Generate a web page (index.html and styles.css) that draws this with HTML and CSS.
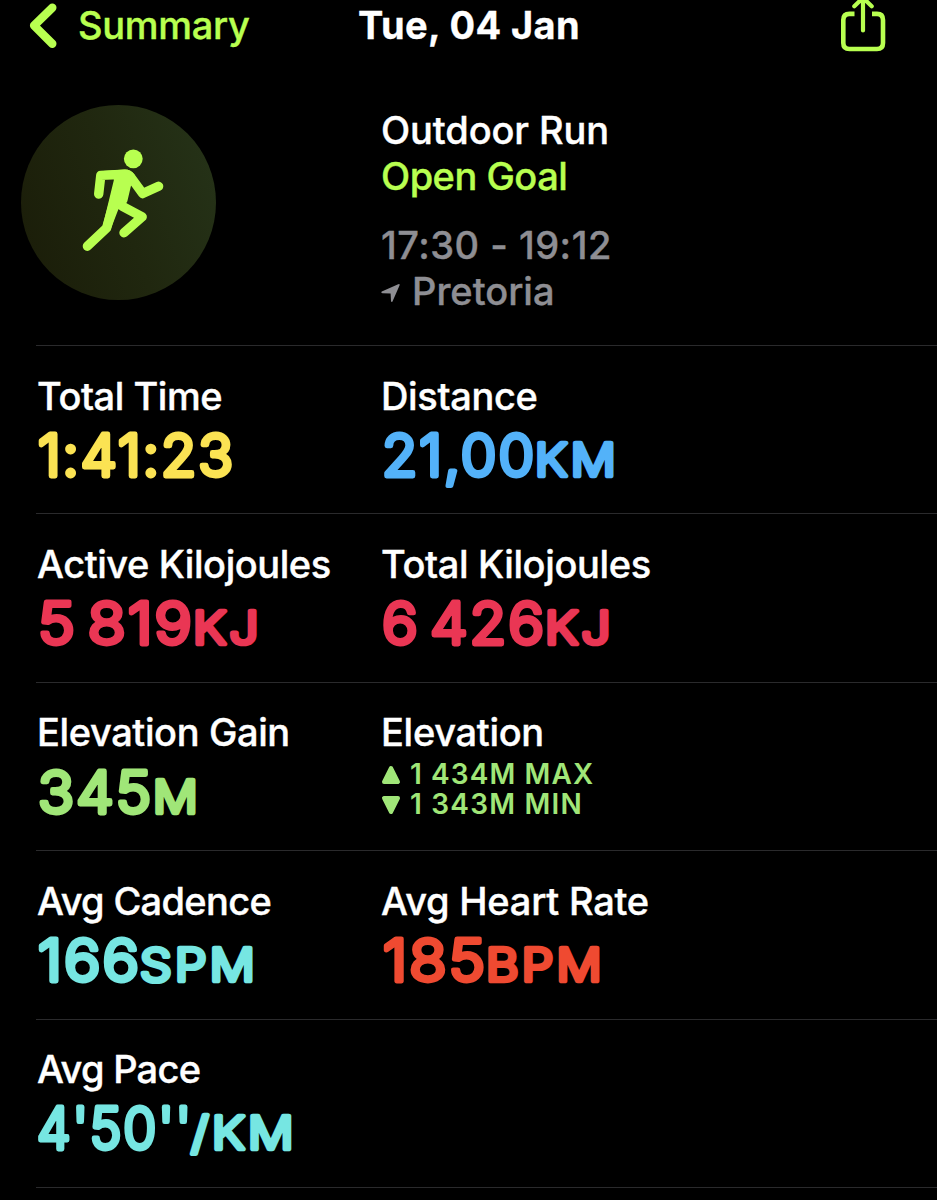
FILE: index.html
```
<!DOCTYPE html>
<html lang="en">
<head>
<meta charset="utf-8">
<title>Workout Summary</title>
<link rel="stylesheet" href="styles.css">
</head>
<body>
<header class="nav">
  <div class="back">
    <svg class="chevron" width="28" height="46" viewBox="0 0 28 46"><path d="M23.3 5.7 5.1 23.6 23.3 41.8" /></svg>
    <span class="back-label">Summary</span>
  </div>
  <h1 class="title">Tue, 04 Jan</h1>
  <svg class="share" width="46" height="54" viewBox="0 0 46 54"><path d="M14.5 13.9H9.5Q3.3 13.9 3.3 20V43Q3.3 49 9.5 49H37Q43 49 43 43V20Q43 13.9 37 13.9H32" /><path class="arrow" d="M23 30.5V0M14.3 6.3 23 -2.2 31.7 6.3" /></svg>
</header>
<main>
  <section class="hero">
    <div class="badge">
      <svg width="194" height="194" viewBox="0 0 194 194">
        <circle cx="112.3" cy="53.8" r="9.4" />
        <path class="torso" d="M82 66 104 64.6Q109.5 64.5 113.5 69.5L109.7 82 106.3 96.5 97.3 104.5 89.6 124.5 81.6 121.5 93 74.5Z" />
        <path d="M77.7 89 79.8 70.4 103.5 69.2Q107.5 69.1 110 72.5L121.7 88.6 137.6 81.3" />
        <path d="M66.4 141.2 85.5 123.2 95 90" />
        <path d="M100 94 101.5 101.3 121.2 111.8 103 127.7" />
      </svg>
    </div>
    <div class="details">
      <div class="line w-run">Outdoor Run</div>
      <div class="line goal w-goal">Open Goal</div>
      <div class="line dim time w-clock">17:30 - 19:12</div>
      <div class="line dim place"><svg width="21" height="20" viewBox="0 0 21 20"><path d="M.8 8.6 17.2 1.2Q19.2.5 18.5 2.5L11.6 18.2Q10.5 20 10 18L9.6 10.6 1.6 10.3Q-.5 9.8.8 8.6Z" /></svg><span class="w-place">Pretoria</span></div>
    </div>
  </section>
  <section class="row">
    <div class="cell"><div class="line w-time">Total Time</div>
      <svg class="value yellow" width="320" height="66"><text x="1" y="54.5" textLength="197" lengthAdjust="spacingAndGlyphs">1:41:23</text></svg></div>
    <div class="cell"><div class="line w-dist">Distance</div>
      <svg class="value blue" width="320" height="66"><text x="1" y="54.5" textLength="154" lengthAdjust="spacingAndGlyphs">21,00</text><text class="unit" x="154" y="54.5" textLength="84" lengthAdjust="spacingAndGlyphs">KM</text></svg></div>
  </section>
  <section class="row">
    <div class="cell"><div class="line w-active">Active Kilojoules</div>
      <svg class="value pink" width="320" height="66"><text x="1" y="54.5" textLength="156" lengthAdjust="spacingAndGlyphs">5 819</text><text class="unit" x="156" y="54.5" textLength="69" lengthAdjust="spacingAndGlyphs">KJ</text></svg></div>
    <div class="cell"><div class="line w-total">Total Kilojoules</div>
      <svg class="value pink" width="320" height="66"><text x="1" y="54.5" textLength="164" lengthAdjust="spacingAndGlyphs">6 426</text><text class="unit" x="164" y="54.5" textLength="69" lengthAdjust="spacingAndGlyphs">KJ</text></svg></div>
  </section>
  <section class="row">
    <div class="cell"><div class="line w-gain">Elevation Gain</div>
      <svg class="value green" width="320" height="66"><text x="1" y="54.5" textLength="115" lengthAdjust="spacingAndGlyphs">345</text><text class="unit" x="116" y="54.5" textLength="48" lengthAdjust="spacingAndGlyphs">M</text></svg></div>
    <div class="cell"><div class="line w-elev">Elevation</div>
      <div class="ranges">
        <div class="range"><svg width="20" height="20" viewBox="0 0 20 20"><path d="M10 3 17 17H3Z" /></svg><span class="w-max">1 434M MAX</span></div>
        <div class="range"><svg width="20" height="20" viewBox="0 0 20 20"><path d="M3 3H17L10 17Z" /></svg><span class="w-min">1 343M MIN</span></div>
      </div></div>
  </section>
  <section class="row">
    <div class="cell"><div class="line w-cad">Avg Cadence</div>
      <svg class="value cyan" width="320" height="66"><text x="1" y="54.5" textLength="103" lengthAdjust="spacingAndGlyphs">166</text><text class="unit" x="103" y="54.5" textLength="118" lengthAdjust="spacingAndGlyphs">SPM</text></svg></div>
    <div class="cell"><div class="line w-heart">Avg Heart Rate</div>
      <svg class="value red" width="320" height="66"><text x="2" y="54.5" textLength="104" lengthAdjust="spacingAndGlyphs">185</text><text class="unit" x="105" y="54.5" textLength="119" lengthAdjust="spacingAndGlyphs">BPM</text></svg></div>
  </section>
  <section class="row">
    <div class="cell"><div class="line w-pace">Avg Pace</div>
      <svg class="value cyan" width="320" height="66"><text x="0" y="54.5" textLength="156" lengthAdjust="spacingAndGlyphs">4'50''</text><text class="unit" x="154" y="54.5" textLength="106" lengthAdjust="spacingAndGlyphs">/KM</text></svg></div>
  </section>
  <div class="end"></div>
</main>
</body>
</html>
```
FILE: styles.css
```
* { box-sizing: border-box; }
body {
  margin: 0;
  height: 1200px;
  overflow: hidden;
  background: #000;
  color: #fff;
  font-family: Inter, "Liberation Sans", sans-serif;
  font-size: 38px;
  font-weight: 500;
  line-height: 46px;
}
svg { display: block; flex: none; overflow: visible; }

.nav {
  display: grid;
  grid-template-columns: 329px 482px 1fr;
  align-items: start;
  height: 106px;
  padding-left: 29px;
}
.back { display: flex; gap: 21px; padding-top: 2px; color: #b8ff50; }
.chevron path { fill: none; stroke: #b8ff50; stroke-width: 8.4; stroke-linecap: round; stroke-linejoin: round; }
.back-label { letter-spacing: -.3px; -webkit-text-stroke: .4px; }
.title { margin: 2px 0 0; font-size: 38px; font-weight: 700; line-height: 46px; letter-spacing: .4px; white-space: nowrap; -webkit-text-stroke: .3px; }
.share path { fill: none; stroke: #b8ff50; stroke-width: 4.6; }
.share .arrow { stroke-width: 4.2; stroke-linecap: round; stroke-linejoin: round; }

.hero { display: flex; height: 239px; padding-left: 21px; }
.badge {
  width: 195px;
  height: 195px;
  margin-top: -.6px;
  border-radius: 50%;
  background: linear-gradient(70deg, #1a1c08, #20270f 50%, #263419);
}
.badge circle, .badge .torso { fill: #b8ff50; stroke: none; }
.badge path { fill: none; stroke: #b8ff50; stroke-width: 9.4; stroke-linecap: round; stroke-linejoin: round; }
.details { margin: 1px 0 0 165px; }
.line { height: 46px; white-space: nowrap; -webkit-text-stroke: .4px; }
.goal { color: #b8ff50; }
.dim { color: #8e8e93; }
.time { margin-top: 23px; }
.place { display: flex; gap: 10px; align-items: center; }
.place svg { margin-top: 4px; }
.place path { fill: #8e8e93; }

.w-run { letter-spacing: -.1px; }
.w-goal { letter-spacing: -.5px; }
.w-clock { letter-spacing: .5px; }
.w-place { letter-spacing: 0; }
.w-time { letter-spacing: -.45px; }
.w-dist { letter-spacing: -.35px; }
.w-active { letter-spacing: -.43px; }
.w-total { letter-spacing: -.37px; }
.w-gain { letter-spacing: -.38px; }
.w-elev { letter-spacing: -.3px; }
.w-cad { letter-spacing: -.68px; }
.w-heart { letter-spacing: -.22px; }
.w-pace { letter-spacing: -.75px; }
.w-max { letter-spacing: 1.1px; }
.w-min { letter-spacing: 1.2px; }

.row {
  display: grid;
  grid-template-columns: 344px 1fr;
  height: 168.4px;
  margin-left: 36px;
  padding: 26.5px 0 0 1px;
  border-top: 1px solid #2a2a2c;
}
.end { margin-left: 36px; border-top: 1px solid #2a2a2c; }

.value { margin-top: 2.4px; font-size: 57px; font-weight: 300; letter-spacing: 2px; word-spacing: -8px; }
.value text { fill: currentColor; stroke: currentColor; stroke-width: 4.8; stroke-linejoin: round; stroke-linecap: round; }
.value .unit { font-size: 44.5px; font-weight: 300; letter-spacing: 3px; stroke-width: 4.6; }
.yellow { color: #fbe353; }
.blue { color: #53b2f9; }
.pink { color: #ea3654; }
.green { color: #a0e678; }
.cyan { color: #76e6e2; }
.red { color: #ef4a31; }

.ranges { padding-top: 5px; }
.range { display: flex; align-items: center; gap: 9px; height: 29.5px; color: #a0e678; font-size: 28px; font-weight: 600; line-height: 29.5px; }
.range path { fill: #a0e678; stroke: #a0e678; stroke-width: 4; stroke-linejoin: round; }
```
